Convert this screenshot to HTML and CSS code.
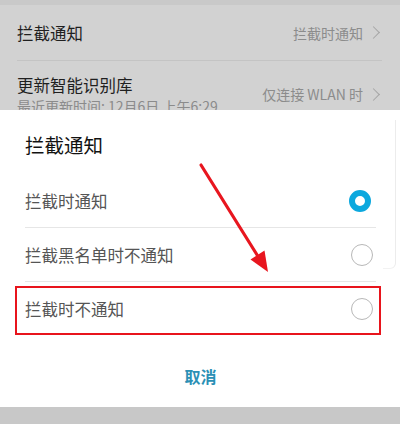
FILE: index.html
```html
<!DOCTYPE html>
<html lang="zh-CN">
<head>
    <meta charset="UTF-8">
    <meta name="viewport" content="width=device-width, initial-scale=1.0">
    <title>拦截通知</title>
    <link rel="stylesheet" href="styles.css">
</head>
<body>

    <div class="settings">
        <div class="top-strip"></div>
        <div class="setting-row first">
            <span class="setting-title">拦截通知</span>
            <span class="setting-value">拦截时通知 <span class="chevron"></span></span>
        </div>
        <div class="setting-row second">
            <div class="setting-text">
                <span class="setting-title">更新智能识别库</span>
                <span class="setting-sub">最近更新时间: 12月6日 上午6:29</span>
            </div>
            <span class="setting-value">仅连接 WLAN 时 <span class="chevron"></span></span>
        </div>
    </div>

    <div class="dialog">
        <div class="dialog-title">拦截通知</div>
        <div class="option">
            <span>拦截时通知</span>
            <span class="radio checked"></span>
        </div>
        <div class="option">
            <span>拦截黑名单时不通知</span>
            <span class="radio"></span>
        </div>
        <div class="option last">
            <span>拦截时不通知</span>
            <span class="radio"></span>
        </div>
        <div class="cancel">取消</div>
        <div class="highlight"></div>
        <div class="ghost-edge"></div>
    </div>

    <div class="bottom-strip"></div>

    <svg class="arrow" width="400" height="424" viewBox="0 0 400 424">
        <line x1="201" y1="165" x2="259" y2="258" stroke="#e8161f" stroke-width="3.2" stroke-linecap="round"/>
        <polygon points="268,272 264.5,250.5 250.5,259.5" fill="#e8161f"/>
    </svg>

</body>
</html>
```

FILE: styles.css
```css
body {
    margin: 0;
    width: 400px;
    height: 424px;
    overflow: hidden;
    background-color: #d1d1d1;
    font-family: "Noto Sans CJK SC", "Noto Sans", sans-serif;
    position: relative;
}
.settings {
    height: 110px;
    overflow: hidden;
    background-color: #d2d2d2;
}
.top-strip {
    height: 5px;
    background-color: #c9c9c9;
}
.setting-row {
    display: flex;
    justify-content: space-between;
    margin: 0 18px 0 17px;
}
.setting-row.first {
    height: 55px;
    align-items: center;
    border-bottom: 1px solid #c4c4c4;
}
.setting-row.second {
    align-items: flex-start;
}
.setting-text {
    display: flex;
    flex-direction: column;
    padding-top: 12px;
}
.setting-title {
    font-size: 16.5px;
    line-height: 24px;
    color: #1f1f1f;
}
.setting-sub {
    font-size: 14px;
    line-height: 18px;
    color: #8b8b8b;
}
.setting-value {
    font-size: 14px;
    color: #8c8c8c;
    display: flex;
    align-items: center;
}
.second .setting-value {
    padding-top: 23px;
}
.chevron {
    display: inline-block;
    width: 8px;
    height: 8px;
    border-top: 1.3px solid #a5a5a5;
    border-right: 1.3px solid #a5a5a5;
    transform: rotate(45deg);
    margin-left: 6px;
    margin-right: 4px;
}
.dialog {
    position: relative;
    height: 297px;
    background-color: #ffffff;
    padding: 0 24px 0 25px;
}
.dialog-title {
    padding: 22px 0 16px;
    font-size: 19.5px;
    line-height: 26px;
    color: #121212;
}
.option {
    height: 53px;
    display: flex;
    justify-content: space-between;
    align-items: center;
    border-bottom: 1px solid #e6e6e6;
    font-size: 16.5px;
    color: #555555;
}
.option.last {
    border-bottom: none;
}
.radio {
    width: 20px;
    height: 20px;
    border: 1.4px solid #b8b8b8;
    border-radius: 50%;
    margin-right: 3px;
}
.radio.checked {
    width: 10px;
    height: 10px;
    border: 6px solid #0ca8de;
    margin-right: 5px;
}
.cancel {
    height: 71px;
    padding-top: 11px;
    box-sizing: border-box;
    display: flex;
    justify-content: center;
    align-items: center;
    font-size: 16px;
    font-weight: bold;
    color: #2b90b5;
}
.highlight {
    position: absolute;
    left: 15px;
    top: 176px;
    width: 362px;
    height: 45px;
    border: 2px solid #e8141c;
}
.ghost-edge {
    position: absolute;
    right: 4px;
    top: 10px;
    width: 12px;
    height: 148px;
    border-right: 1px solid #ececec;
    border-bottom: 1px solid #f2f2f2;
    border-bottom-right-radius: 6px;
}
.bottom-strip {
    height: 17px;
    background-color: #c8c8c8;
}
.arrow {
    position: absolute;
    left: 0;
    top: 0;
}
```
